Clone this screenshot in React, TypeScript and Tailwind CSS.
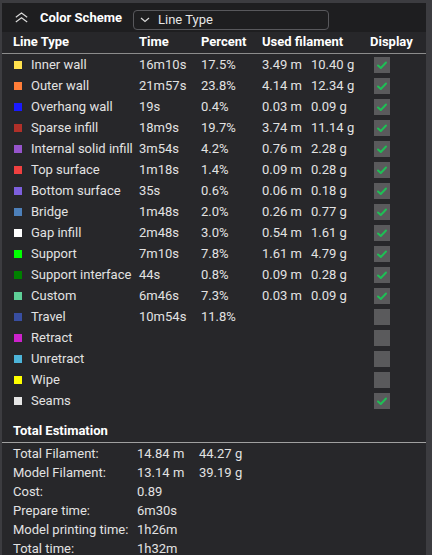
import React from 'react';

type LineRow = {
  name: string;
  color: string;
  time: string;
  percent: string;
  meters?: string;
  grams?: string;
  shown: boolean;
};

const LINES: LineRow[] = [
  { name: 'Inner wall', color: '#ffe14d', time: '16m10s', percent: '17.5%', meters: '3.49 m', grams: '10.40 g', shown: true },
  { name: 'Outer wall', color: '#ff7d38', time: '21m57s', percent: '23.8%', meters: '4.14 m', grams: '12.34 g', shown: true },
  { name: 'Overhang wall', color: '#1a1aff', time: '19s', percent: '0.4%', meters: '0.03 m', grams: '0.09 g', shown: true },
  { name: 'Sparse infill', color: '#b03029', time: '18m9s', percent: '19.7%', meters: '3.74 m', grams: '11.14 g', shown: true },
  { name: 'Internal solid infill', color: '#9654cc', time: '3m54s', percent: '4.2%', meters: '0.76 m', grams: '2.28 g', shown: true },
  { name: 'Top surface', color: '#f04040', time: '1m18s', percent: '1.4%', meters: '0.09 m', grams: '0.28 g', shown: true },
  { name: 'Bottom surface', color: '#7d5fdd', time: '35s', percent: '0.6%', meters: '0.06 m', grams: '0.18 g', shown: true },
  { name: 'Bridge', color: '#4d80ba', time: '1m48s', percent: '2.0%', meters: '0.26 m', grams: '0.77 g', shown: true },
  { name: 'Gap infill', color: '#ffffff', time: '2m48s', percent: '3.0%', meters: '0.54 m', grams: '1.61 g', shown: true },
  { name: 'Support', color: '#00ff00', time: '7m10s', percent: '7.8%', meters: '1.61 m', grams: '4.79 g', shown: true },
  { name: 'Support interface', color: '#008000', time: '44s', percent: '0.8%', meters: '0.09 m', grams: '0.28 g', shown: true },
  { name: 'Custom', color: '#5ecf97', time: '6m46s', percent: '7.3%', meters: '0.03 m', grams: '0.09 g', shown: true },
  { name: 'Travel', color: '#384ea1', time: '10m54s', percent: '11.8%', shown: false },
  { name: 'Retract', color: '#cc22cc', time: '', percent: '', shown: false },
  { name: 'Unretract', color: '#4db4d9', time: '', percent: '', shown: false },
  { name: 'Wipe', color: '#ffff00', time: '', percent: '', shown: false },
  { name: 'Seams', color: '#e6e6e6', time: '', percent: '', shown: true },
];

const TOTALS = [
  { label: 'Total Filament:', value: '14.84 m', extra: '44.27 g' },
  { label: 'Model Filament:', value: '13.14 m', extra: '39.19 g' },
  { label: 'Cost:', value: '0.89' },
  { label: 'Prepare time:', value: '6m30s' },
  { label: 'Model printing time:', value: '1h26m' },
  { label: 'Total time:', value: '1h32m' },
];

function Checkbox({ checked }: { checked: boolean }) {
  return (
    <div className="w-4 h-4 bg-[#5a5a5c] flex items-center justify-center">
      {checked && (
        <svg width="12" height="12" viewBox="0 0 12 12" fill="none">
          <polyline points="2,6.5 4.8,9 10,3.5" stroke="#1fbf55" strokeWidth="2" strokeLinecap="round" strokeLinejoin="round" />
        </svg>
      )}
    </div>
  );
}

export default function App() {
  return (
    <div
      className="w-[432px] h-[555px] overflow-hidden bg-[#3c3c40] flex text-[13px] leading-none text-[#e2e2e2]"
      style={{ fontFamily: 'Roboto, "Noto Sans", sans-serif' }}
    >
      <div className="w-[424px] mt-[3px] ml-[2px] bg-[#27272a] flex flex-col">
        {/* Header bar */}
        <div className="h-[29px] shrink-0 bg-[#1e1e20] flex items-center">
          <svg width="13" height="11" viewBox="0 0 13 11" fill="none" className="ml-[13px]">
            <polyline points="0.8,5.2 6.5,1 12.2,5.2" stroke="#d8d8d8" strokeWidth="1.2" />
            <polyline points="0.8,10 6.5,5.8 12.2,10" stroke="#d8d8d8" strokeWidth="1.2" />
          </svg>
          <span className="ml-[12px] w-[93px] font-bold text-white">Color Scheme</span>
          <div className="mt-[4px] w-[196px] h-[20px] border border-[#58585c] rounded-[4px] flex items-center">
            <svg width="10" height="6" viewBox="0 0 10 6" fill="none" className="ml-[6px]">
              <polyline points="1,1 5,4.5 9,1" stroke="#d8d8d8" strokeWidth="1.2" />
            </svg>
            <span className="ml-[8px] text-[#e6e6e6]">Line Type</span>
          </div>
        </div>

        {/* Column headings */}
        <div className="h-[22px] shrink-0 pb-[2px] flex items-center font-bold text-white border-b border-[#8c8c8c]">
          <span className="w-[137px] pl-[11px]">Line Type</span>
          <span className="w-[62px]">Time</span>
          <span className="w-[61px]">Percent</span>
          <span className="w-[108px]">Used filament</span>
          <span>Display</span>
        </div>

        {/* Line type rows */}
        <div className="flex flex-col">
          {LINES.map((l) => (
            <div key={l.name} className="h-[21px] flex items-center">
              <div className="w-[137px] pl-[12px] flex items-center whitespace-nowrap">
                <span className="w-[8px] h-[8px] shrink-0" style={{ backgroundColor: l.color }} />
                <span className="ml-[9px]">{l.name}</span>
              </div>
              <span className="w-[62px]">{l.time}</span>
              <span className="w-[61px]">{l.percent}</span>
              <span className="w-[49px]">{l.meters}</span>
              <span className="w-[63px]">{l.grams}</span>
              <Checkbox checked={l.shown} />
            </div>
          ))}
        </div>

        {/* Totals */}
        <div className="mt-[9px] h-[23px] shrink-0 pb-[1px] flex items-center pl-[11px] font-bold text-white border-b border-[#a0a0a0]">
          Total Estimation
        </div>
        <div className="flex flex-col gap-[6px] pt-[4px]">
          {TOTALS.map((t) => (
            <div key={t.label} className="h-[13px] flex items-center whitespace-nowrap">
              <span className="w-[135px] pl-[11px]">{t.label}</span>
              <span className="w-[62px]">{t.value}</span>
              {t.extra && <span>{t.extra}</span>}
            </div>
          ))}
        </div>
      </div>
    </div>
  );
}
